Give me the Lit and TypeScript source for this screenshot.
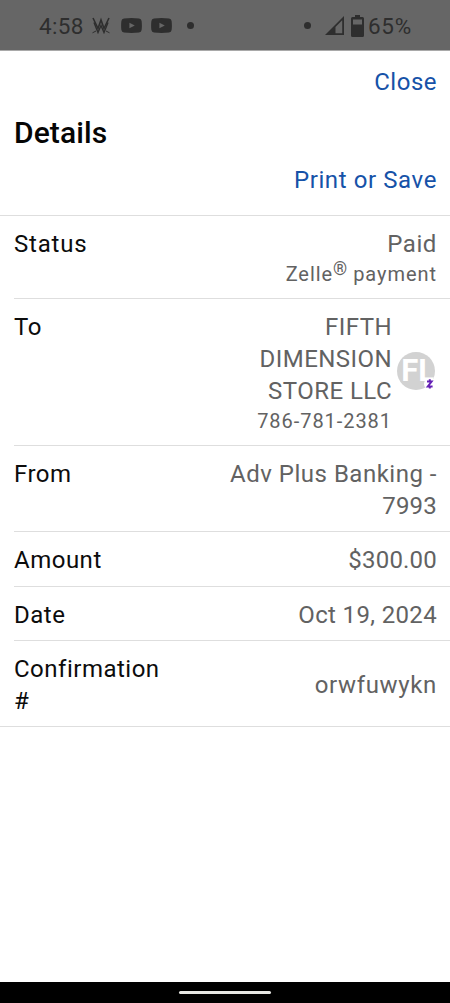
import { LitElement, html, css, svg } from "lit";
import { customElement } from "lit/decorators.js";

const tube = svg`<path fill-rule="evenodd" d="M3 0.5Q10.5-0.3 18 0.5Q20.3 0.8 20.6 3Q21.2 7.5 20.6 12Q20.3 14.3 18 14.6Q10.5 15.3 3 14.6Q0.7 14.3 0.4 12Q-0.2 7.5 0.4 3Q0.7 0.8 3 0.5ZM8.4 4.7V10.3L13.8 7.5Z"/>`;

@customElement("status-bar")
export class StatusBar extends LitElement {
  static styles = css`
    :host { display: block; height: 51px; background: #666; color: #2e2e2e; border-bottom: 1px solid #a9a9a9; box-sizing: border-box; }
    .bar { display: flex; align-items: center; height: 50px; padding: 1px 38px 0 39px; box-sizing: border-box; font: 400 22.5px/26px Roboto, sans-serif; }
    svg { display: block; fill: currentColor; flex: none; }
    .time { width: 53px; letter-spacing: 0.3px; }
    .w { margin-right: 11px; }
    .tube { margin-right: 9px; }
    .dot { width: 7px; height: 7px; border-radius: 50%; background: currentColor; }
    .first { margin-left: 6px; }
    .spacer { flex: 1; }
    .signal { margin-left: 14px; }
    .battery { margin: 0 4px 0 7px; }
    .pct { width: 44px; white-space: nowrap; letter-spacing: 0.7px; }
  `;
  render() {
    return html`<div class="bar">
      <span class="time">4:58</span>
      <svg class="w" width="18" height="17" viewBox="0 0 18 17"><g fill="none" stroke="currentColor" stroke-width="1.6"><path d="M1 1L6 11.5L9 3L12 11.5L17 1"/><path d="M2 5.5L6 15.5L9 8.5L12 15.5L16 5.5" stroke-width="1.4"/><path d="M0.5 15.8L4 14M17.5 15.8L14 14" stroke-width="1"/></g></svg>
      <svg class="tube" width="21" height="15" viewBox="0 0 21 15">${tube}</svg>
      <svg class="tube" width="21" height="15" viewBox="0 0 21 15">${tube}</svg>
      <i class="dot first"></i>
      <span class="spacer"></span>
      <i class="dot"></i>
      <svg class="signal" width="19" height="19" viewBox="0 0 19 19"><path fill-rule="evenodd" d="M19 0V19H0ZM17.2 4.2L10.5 11V17.3H17.2Z"/></svg>
      <svg class="battery" width="13" height="22" viewBox="0 0 13 22"><path fill-rule="evenodd" d="M4 0H9V2H11.5Q13 2 13 3.5V20.5Q13 22 11.5 22H1.5Q0 22 0 20.5V3.5Q0 2 1.5 2H4ZM2 4.5V9.5H11V4.5Z"/></svg>
      <span class="pct">65%</span>
    </div>`;
  }
}

@customElement("payee-avatar")
export class PayeeAvatar extends LitElement {
  static styles = css`
    :host { display: block; position: relative; width: 38px; height: 38px; flex: none; }
    .disc { width: 38px; height: 38px; border-radius: 50%; background: #d2d2d2; color: #fff; font: 700 31px/38px Roboto, sans-serif; letter-spacing: 0; text-indent: 1px; overflow: hidden; white-space: nowrap; }
    .badge { position: absolute; left: 27px; top: 26px; width: 12px; height: 12px; border-radius: 50%; background: #fff; }
    svg { display: block; }
  `;
  render() {
    return html`<div class="disc">FL</div>
      <div class="badge"><svg width="12" height="12" viewBox="1 1 12 12"><path d="M4 4.5H8.6L4.8 9.4H9.6M6.8 2.3V4.5M6.8 9.4V11.6" fill="none" stroke="#6420b5" stroke-width="2"/></svg></div>`;
  }
}

@customElement("detail-row")
export class DetailRow extends LitElement {
  static properties = { label: {} };
  label = "";
  static styles = css`
    :host { display: block; padding: 0 13px 0 14px; }
    .row { display: flex; justify-content: space-between; padding: 12px 0 9px; }
    .label { width: 150px; color: #0c0c0c; }
    .value { display: flex; flex-direction: column; justify-content: center; align-items: flex-end; text-align: right; color: #626262; }
  `;
  render() {
    return html`<div class="row"><div class="label">${this.label}</div><div class="value"><slot></slot></div></div>`;
  }
}

@customElement("app-root")
export class AppRoot extends LitElement {
  static styles = css`
    :host { display: flex; flex-direction: column; height: 1003px; background: #fff; font: 400 24px/32px Roboto, sans-serif; letter-spacing: 0.5px; overflow: hidden; }
    .head { display: flex; flex-direction: column; border-bottom: 1px solid #dedede; padding: 15px 13px 0 14px; height: 149px; }
    .link { align-self: flex-end; color: #1652a8; letter-spacing: 0.6px; }
    .close { letter-spacing: 0.5px; }
    h1 { margin: 15px 0 11px; font-size: 30px; line-height: 40px; font-weight: 500; letter-spacing: 0.1px; color: #050505; }
    .line { height: 1px; flex: none; background: #dedede; margin-left: 14px; }
    .full { margin-left: 0; }
    .status { letter-spacing: 0.8px; }
    .paid { letter-spacing: 0.6px; }
    .digits { letter-spacing: 0.2px; }
    .date { letter-spacing: 0.35px; }
    .code { letter-spacing: 0.65px; }
    .amount { padding-bottom: 1px; }
    .small { font-size: 20px; line-height: 29px; letter-spacing: 0.95px; }
    .reg { font-size: 18px; line-height: 0; vertical-align: 6px; letter-spacing: 0; }
    .payee { display: flex; align-items: flex-start; gap: 5px; margin-right: 2px; }
    .name { width: 140px; letter-spacing: 0.45px; }
    payee-avatar { margin-top: 41px; }
    .nav { margin-top: auto; height: 21px; background: #000; display: flex; align-items: center; justify-content: center; }
    .pill { width: 92px; height: 3px; border-radius: 2px; background: #e8e8e4; }
  `;
  render() {
    return html`
      <status-bar></status-bar>
      <div class="head">
        <div class="link close">Close</div>
        <h1>Details</h1>
        <div class="link">Print or Save</div>
      </div>
      <detail-row class="status" label="Status"><div class="paid">Paid</div><div class="small">Zelle<span class="reg">®</span> payment</div></detail-row>
      <div class="line"></div>
      <detail-row label="To"><div class="payee"><div class="name">FIFTH DIMENSION STORE LLC<div class="small">786-781-2381</div></div><payee-avatar></payee-avatar></div></detail-row>
      <div class="line"></div>
      <detail-row label="From"><div>Adv Plus Banking -<br><span class="digits">7993</span></div></detail-row>
      <div class="line"></div>
      <detail-row class="amount" label="Amount"><div class="digits">$300.00</div></detail-row>
      <div class="line"></div>
      <detail-row label="Date"><div class="date">Oct 19, 2024</div></detail-row>
      <div class="line"></div>
      <detail-row label="Confirmation #"><div class="code">orwfuwykn</div></detail-row>
      <div class="line full"></div>
      <div class="nav"><div class="pill"></div></div>`;
  }
}
